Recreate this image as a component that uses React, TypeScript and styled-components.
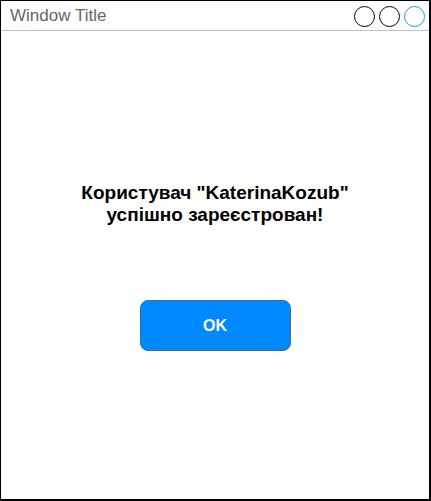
import React from "react";
import styled, { createGlobalStyle } from "styled-components";

const Global = createGlobalStyle`
  html, body { margin: 0; padding: 0; background: #fff; }
  body { font-family: "Liberation Sans", Arial, sans-serif; }
  * { box-sizing: border-box; }
`;

const Window = styled.div`
  width: 431px;
  height: 501px;
  border: 1px solid #000;
  border-right-width: 2px;
  border-bottom-width: 2px;
  display: flex;
  flex-direction: column;
  background: #fff;
`;

const TitleBar = styled.div`
  height: 30px;
  border-bottom: 1px solid #c0c0c0;
  display: flex;
  align-items: center;
  justify-content: space-between;
  padding: 0 4px 0 9px;
`;

const Title = styled.span`
  font-size: 17px;
  color: #666;
`;

const Controls = styled.div`
  display: flex;
  gap: 4px;
  padding-top: 1px;
`;

const Circle = styled.span<{ $color: string }>`
  width: 21px;
  height: 21px;
  border-radius: 50%;
  border: 1px solid ${(p) => p.$color};
`;

const Body = styled.div`
  flex: 1;
  display: flex;
  flex-direction: column;
  align-items: center;
  padding-top: 151px;
`;

const Message = styled.div`
  font-size: 19px;
  font-weight: bold;
  color: #000;
  text-align: center;
  line-height: 22px;
`;

const OkButton = styled.button`
  margin-top: 74px;
  width: 151px;
  height: 51px;
  border-radius: 8px;
  background: #0088ff;
  border: 1px solid #3a6e9e;
  color: #fff;
  font-family: "Liberation Sans", Arial, sans-serif;
  font-weight: bold;
  font-size: 16px;
  padding: 0;
`;

export default function App() {
  return (
    <>
      <Global />
      <Window>
        <TitleBar>
          <Title>Window Title</Title>
          <Controls>
            <Circle $color="#000" />
            <Circle $color="#000" />
            <Circle $color="#1e90ff" />
          </Controls>
        </TitleBar>
        <Body>
          <Message>
            Користувач "KaterinaKozub"
            <br />
            успішно зареєстрован!
          </Message>
          <OkButton>OK</OkButton>
        </Body>
      </Window>
    </>
  );
}
